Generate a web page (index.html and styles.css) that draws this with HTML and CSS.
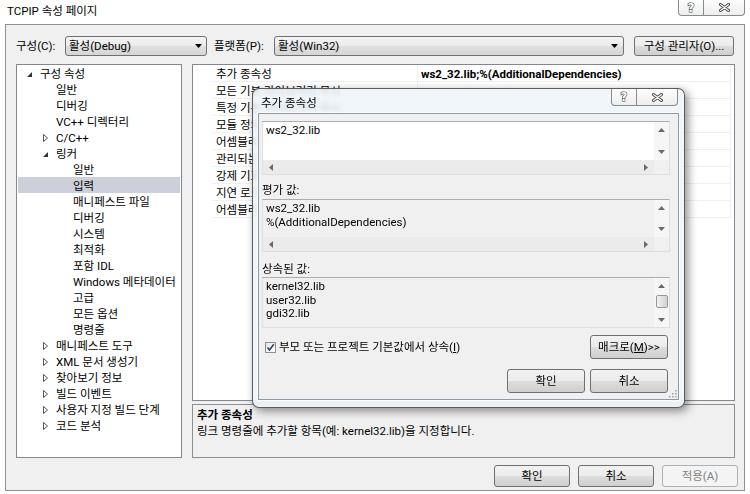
FILE: index.html
```html
<!DOCTYPE html>
<html lang="ko">
  <head>
    <meta charset="UTF-8" />
    <title>TCPIP 속성 페이지</title>
    <link rel="stylesheet" href="styles.css">
  </head>
  <body>
    <!-- 창 제목 -->
    <header class="titlebar">
      <span class="title">TCPIP 속성 페이지</span>
      <div class="caption">
        <span class="cap cap-help"><span class="q">?</span></span>
        <span class="cap cap-close">
          <svg width="11" height="9" viewBox="0 0 11 9"><path d="M1.5 1.5L9.5 7.5M9.5 1.5L1.5 7.5" stroke="#4a4a4a" stroke-width="3" stroke-linecap="round"/><path d="M1.5 1.5L9.5 7.5M9.5 1.5L1.5 7.5" stroke="#fff" stroke-width="1.2" stroke-linecap="round"/></svg>
        </span>
      </div>
    </header>

    <section class="client">
      <div class="toolbar">
        <span class="lbl lbl-config">구성(C):</span>
        <div class="combo combo-config">
          <span>활성(Debug)</span>
          <svg width="7" height="4"><polygon points="0,0 7,0 3.5,4" fill="#000"/></svg>
        </div>
        <span class="lbl lbl-platform">플랫폼(P):</span>
        <div class="combo combo-platform">
          <span>활성(Win32)</span>
          <svg width="7" height="4"><polygon points="0,0 7,0 3.5,4" fill="#000"/></svg>
        </div>
        <button class="btn btn-mgr">구성 관리자(O)...</button>
      </div>

      <div class="main">
        <!-- 속성 트리 -->
        <ul class="tree">
          <li class="l0"><span class="tw"><svg class="exp" width="5" height="5"><polygon points="5,0 5,5 0,5" fill="#333"/></svg></span>구성 속성</li>
          <li class="l1"><span class="tw"></span>일반</li>
          <li class="l1"><span class="tw"></span>디버깅</li>
          <li class="l1"><span class="tw"></span>VC++ 디렉터리</li>
          <li class="l1"><span class="tw"><svg class="col" width="5" height="8"><polygon points="0.5,0.5 4.5,4 0.5,7.5" fill="#fff" stroke="#555"/></svg></span>C/C++</li>
          <li class="l1"><span class="tw"><svg class="exp" width="5" height="5"><polygon points="5,0 5,5 0,5" fill="#333"/></svg></span>링커</li>
          <li class="l2"><span class="tw"></span>일반</li>
          <li class="l2 sel"><span class="tw"></span>입력</li>
          <li class="l2"><span class="tw"></span>매니페스트 파일</li>
          <li class="l2"><span class="tw"></span>디버깅</li>
          <li class="l2"><span class="tw"></span>시스템</li>
          <li class="l2"><span class="tw"></span>최적화</li>
          <li class="l2"><span class="tw"></span>포함 IDL</li>
          <li class="l2"><span class="tw"></span>Windows 메타데이터</li>
          <li class="l2"><span class="tw"></span>고급</li>
          <li class="l2"><span class="tw"></span>모든 옵션</li>
          <li class="l2"><span class="tw"></span>명령줄</li>
          <li class="l1"><span class="tw"><svg class="col" width="5" height="8"><polygon points="0.5,0.5 4.5,4 0.5,7.5" fill="#fff" stroke="#555"/></svg></span>매니페스트 도구</li>
          <li class="l1"><span class="tw"><svg class="col" width="5" height="8"><polygon points="0.5,0.5 4.5,4 0.5,7.5" fill="#fff" stroke="#555"/></svg></span>XML 문서 생성기</li>
          <li class="l1"><span class="tw"><svg class="col" width="5" height="8"><polygon points="0.5,0.5 4.5,4 0.5,7.5" fill="#fff" stroke="#555"/></svg></span>찾아보기 정보</li>
          <li class="l1"><span class="tw"><svg class="col" width="5" height="8"><polygon points="0.5,0.5 4.5,4 0.5,7.5" fill="#fff" stroke="#555"/></svg></span>빌드 이벤트</li>
          <li class="l1"><span class="tw"><svg class="col" width="5" height="8"><polygon points="0.5,0.5 4.5,4 0.5,7.5" fill="#fff" stroke="#555"/></svg></span>사용자 지정 빌드 단계</li>
          <li class="l1"><span class="tw"><svg class="col" width="5" height="8"><polygon points="0.5,0.5 4.5,4 0.5,7.5" fill="#fff" stroke="#555"/></svg></span>코드 분석</li>
        </ul>

        <div class="right">
          <!-- 속성 그리드 -->
          <div class="grid">
            <div class="row"><span class="gut"></span><span class="name">추가 종속성</span><span class="val">ws2_32.lib;%(AdditionalDependencies)</span></div>
            <div class="row"><span class="gut"></span><span class="name">모든 기본 라이브러리 무시</span><span class="val"></span></div>
            <div class="row"><span class="gut"></span><span class="name">특정 기본 라이브러리 무시</span><span class="val"></span></div>
            <div class="row"><span class="gut"></span><span class="name">모듈 정의 파일</span><span class="val"></span></div>
            <div class="row"><span class="gut"></span><span class="name">어셈블리에 모듈 추가</span><span class="val"></span></div>
            <div class="row"><span class="gut"></span><span class="name">관리되는 리소스 파일 포함</span><span class="val"></span></div>
            <div class="row"><span class="gut"></span><span class="name">강제 기호 참조</span><span class="val"></span></div>
            <div class="row"><span class="gut"></span><span class="name">지연 로드된 DLL</span><span class="val"></span></div>
            <div class="row"><span class="gut"></span><span class="name">어셈블리 링크 리소스</span><span class="val"></span></div>
          </div>
          <div class="desc">
            <b>추가 종속성</b><br>
            링크 명령줄에 추가할 항목(예: kernel32.lib)을 지정합니다.
          </div>
        </div>
      </div>

      <div class="footer">
        <button class="btn">확인</button>
        <button class="btn">취소</button>
        <button class="btn" disabled>적용(A)</button>
      </div>
    </section>

    <!-- 추가 종속성 대화 상자 -->
    <div class="dialog">
      <div class="dlg-head">
        <span class="dlg-title">추가 종속성</span>
        <div class="caption">
          <span class="cap cap-help"><span class="q">?</span></span>
          <span class="cap cap-close">
            <svg width="11" height="9" viewBox="0 0 11 9"><path d="M1.5 1.5L9.5 7.5M9.5 1.5L1.5 7.5" stroke="#4a4a4a" stroke-width="3" stroke-linecap="round"/><path d="M1.5 1.5L9.5 7.5M9.5 1.5L1.5 7.5" stroke="#fff" stroke-width="1.2" stroke-linecap="round"/></svg>
          </span>
        </div>
      </div>
      <div class="dlg-body">
        <div class="tb tb1">
          <div class="tb-text">ws2_32.lib</div>
          <div class="vs">
            <span class="sb"><svg width="7" height="4"><polygon points="3.5,0 7,4 0,4"/></svg></span>
            <span class="sb"><svg width="7" height="4"><polygon points="0,0 7,0 3.5,4"/></svg></span>
          </div>
          <div class="hs">
            <span class="sb"><svg width="4" height="7"><polygon points="4,0 4,7 0,3.5"/></svg></span>
            <span class="sb"><svg width="4" height="7"><polygon points="0,0 4,3.5 0,7"/></svg></span>
          </div>
          <div class="corner"></div>
        </div>

        <div class="dlg-lbl lbl-eval">평가 값:</div>
        <div class="tb tb2">
          <div class="tb-text">ws2_32.lib<br>%(AdditionalDependencies)</div>
          <div class="vs">
            <span class="sb"><svg width="7" height="4"><polygon points="3.5,0 7,4 0,4"/></svg></span>
            <span class="sb"><svg width="7" height="4"><polygon points="0,0 7,0 3.5,4"/></svg></span>
          </div>
          <div class="hs">
            <span class="sb"><svg width="4" height="7"><polygon points="4,0 4,7 0,3.5"/></svg></span>
            <span class="sb"><svg width="4" height="7"><polygon points="0,0 4,3.5 0,7"/></svg></span>
          </div>
          <div class="corner"></div>
        </div>

        <div class="dlg-lbl lbl-inh">상속된 값:</div>
        <div class="tb tb3">
          <div class="tb-text">kernel32.lib<br>user32.lib<br>gdi32.lib</div>
          <div class="vs">
            <span class="sb"><svg width="7" height="4"><polygon points="3.5,0 7,4 0,4"/></svg></span>
            <span class="thumb"></span>
            <span class="sb sb-end"><svg width="7" height="4"><polygon points="0,0 7,0 3.5,4"/></svg></span>
          </div>
        </div>

        <div class="opts">
          <label class="chk">
            <span class="box"><svg width="9" height="9" viewBox="0 0 9 9"><path d="M1.5 4.5L3.5 7L7.8 1.2" fill="none" stroke="#2e3f6e" stroke-width="1.6"/></svg></span>
            <span>부모 또는 프로젝트 기본값에서 상속(<u>I</u>)</span>
          </label>
          <button class="btn btn-dlg">매크로(<u>M</u>)&gt;&gt;</button>
        </div>
        <div class="dlg-btns">
          <button class="btn btn-dlg">확인</button>
          <button class="btn btn-dlg">취소</button>
        </div>
        <svg class="grip" width="9" height="9" viewBox="0 0 9 9">
          <rect x="7" y="1" width="1.5" height="1.5" fill="#a0a0a0"/>
          <rect x="4" y="4" width="1.5" height="1.5" fill="#a0a0a0"/>
          <rect x="7" y="4" width="1.5" height="1.5" fill="#a0a0a0"/>
          <rect x="1" y="7" width="1.5" height="1.5" fill="#a0a0a0"/>
          <rect x="4" y="7" width="1.5" height="1.5" fill="#a0a0a0"/>
          <rect x="7" y="7" width="1.5" height="1.5" fill="#a0a0a0"/>
        </svg>
      </div>
    </div>
  </body>
</html>
```

FILE: styles.css
```css
* {
  box-sizing: border-box;
}
body {
  margin: 0;
  width: 750px;
  height: 494px;
  overflow: hidden;
  position: relative;
  background: #fff;
  color: #000;
  font-family: Roboto, "Noto Sans CJK KR", sans-serif;
  font-size: 11.5px;
  line-height: 16px;
}
button {
  font: inherit;
  color: inherit;
  padding: 0;
}

/* 제목 표시줄 */
.titlebar {
  height: 24px;
  display: flex;
  justify-content: space-between;
  align-items: flex-start;
  padding-left: 7px;
}
.title {
  padding-top: 3px;
}
.titlebar .caption {
  margin-right: 5px;
}
.caption {
  display: flex;
}
.cap {
  height: 16px;
  display: flex;
  align-items: center;
  justify-content: center;
  border: 1px solid #8a8a8a;
  border-top: 0;
  background: linear-gradient(#fdfdfd, #eeeeee);
}
.cap-help {
  width: 25px;
  border-right: 0;
  border-radius: 0 0 0 4px;
}
.cap-close {
  width: 42px;
  border-radius: 0 0 4px 0;
}
.q {
  font: bold 12px/12px "DejaVu Sans", sans-serif;
  color: #fff;
  -webkit-text-stroke: 1.2px #4a4a4a;
  paint-order: stroke fill;
}

/* 창 본문 */
.client {
  margin-left: 5px;
  width: 740px;
  height: 467px;
  border: 1px solid #8e8f8f;
  background: #f0f0f0;
  padding: 11px 6px 0 10px;
}
.toolbar {
  display: flex;
  align-items: center;
  height: 20px;
}
.lbl-config {
  width: 49px;
}
.lbl-platform {
  width: 60px;
  margin-left: 7px;
}
.combo {
  height: 20px;
  display: flex;
  align-items: center;
  justify-content: space-between;
  padding: 0 4px 0 3px;
  border: 1px solid #707070;
  border-radius: 3px;
  background: linear-gradient(#f4f4f4, #ebebeb 50%, #dfdfdf 50%, #d6d6d6);
}
.combo-config {
  width: 142px;
  padding-right: 4px;
}
.combo-platform {
  width: 350px;
  padding-right: 5px;
}
.btn {
  height: 22px;
  width: 76px;
  border: 1px solid #707070;
  border-radius: 3px;
  background: linear-gradient(#f2f2f2, #ebebeb 50%, #dddddd 50%, #cfcfcf);
  text-align: center;
}
.btn:disabled {
  border-color: #adb2b5;
  background: #f4f4f4;
  color: #838383;
}
.btn-mgr {
  width: 100px;
  height: 20px;
  margin-left: 10px;
}

.main {
  display: flex;
  margin-top: 8px;
}

/* 트리 */
.tree {
  width: 166px;
  height: 394px;
  margin: 0;
  padding: 0;
  list-style: none;
  border: 1px solid #828790;
  background: #fff;
}
.tree li {
  height: 16px;
  margin: 0 1px;
  padding-top: 2px;
  display: flex;
  align-items: center;
  white-space: nowrap;
}
.tree li.sel {
  background: #cdd0da;
}
.tw {
  width: 16px;
  flex: none;
  display: flex;
  align-items: center;
  padding-left: 3px;
}
.tw .exp {
  margin-top: 1px;
}
.l0 {
  padding-left: 6px;
}
.l1 {
  padding-left: 22px;
}
.l2 {
  padding-left: 39px;
}

/* 속성 그리드 */
.right {
  width: 543px;
  margin-left: 10px;
}
.grid {
  height: 337px;
  border: 1px solid #828790;
  background: #fff;
}
.row {
  display: flex;
  height: 17px;
}
.gut {
  width: 19px;
}
.name {
  width: 206px;
  padding: 1px 0 0 4px;
  border-bottom: 1px solid #f0f0f0;
  border-right: 1px solid #f0f0f0;
  white-space: nowrap;
}
.val {
  width: 313px;
  padding: 1px 0 0 3px;
  font-weight: bold;
  border-bottom: 1px solid #f0f0f0;
  border-right: 1px solid #f0f0f0;
  white-space: nowrap;
}
.desc {
  height: 54px;
  margin-top: 3px;
  padding: 2px 4px;
  border: 1px solid #8e8f8f;
}

.footer {
  display: flex;
  justify-content: flex-end;
  gap: 8px;
  margin-top: 7px;
}

/* 대화 상자 */
.dialog {
  position: absolute;
  left: 252px;
  top: 88px;
  width: 433px;
  height: 320px;
  padding: 0 5px;
  border: 1px solid rgba(40, 40, 40, 0.75);
  border-radius: 7px;
  background: rgba(238, 244, 249, 0.84);
  backdrop-filter: blur(2.5px);
  box-shadow: 3px 3px 10px rgba(0, 0, 0, 0.45);
}
.dlg-head {
  height: 24px;
  display: flex;
  justify-content: space-between;
  align-items: flex-start;
}
.dlg-title {
  padding: 6px 0 0 3px;
}
.dlg-head .caption {
  margin-right: 1px;
}
.dlg-head .cap {
  height: 17px;
}
.dlg-body {
  position: relative;
  height: 287px;
  display: flex;
  flex-direction: column;
  padding: 7px 8px 0 3px;
  border: 1px solid #8e99a6;
  background: #f0f0f0;
  box-shadow: 0 0 0 1px rgba(255, 255, 255, 0.8);
}
.dlg-lbl {
  height: 16px;
}
.lbl-eval {
  margin-top: 7px;
  margin-bottom: 1px;
}
.lbl-inh {
  margin-top: 9px;
  margin-bottom: 0;
}

.tb {
  display: grid;
  grid-template-columns: 1fr 15px;
  border: 1px solid #dbdfe6;
  border-top-color: #abadb3;
}
.tb1 {
  height: 54px;
  grid-template-rows: 1fr 14px;
  background: #fff;
}
.tb2 {
  height: 53px;
  grid-template-rows: 1fr 14px;
  background: #f0f0f0;
}
.tb3 {
  height: 51px;
  background: #f0f0f0;
}
.tb-text {
  padding: 1px 3px;
  line-height: 14px;
}
.tb2 .tb-text {
  padding-top: 1px;
}
.tb3 .tb-text {
  padding-top: 2px;
  line-height: 13.5px;
}
.vs {
  display: flex;
  flex-direction: column;
  justify-content: space-between;
  background: #f6f6f6;
}
.hs {
  display: flex;
  justify-content: space-between;
  background: #ebebeb;
}
.corner {
  background: #f0f0f0;
}
.sb {
  flex: none;
  width: 16px;
  height: 16px;
  display: flex;
  align-items: center;
  justify-content: center;
  fill: #6a6a6a;
}
.vs .sb {
  width: 15px;
}
.hs .sb {
  height: 14px;
}
.thumb {
  height: 13px;
  margin: 1px 1px 0 2px;
  border: 1px solid #979797;
  border-radius: 2px;
  background: linear-gradient(90deg, #f3f3f3, #e2e2e2 50%, #d3d3d3);
}
.sb-end {
  margin-top: auto;
  height: 14px;
}

.opts {
  display: flex;
  align-items: center;
  justify-content: space-between;
  height: 24px;
  margin-top: 7px;
}
.chk {
  display: flex;
  align-items: center;
  gap: 3px;
  padding-left: 3px;
}
.box {
  width: 11px;
  height: 11px;
  display: flex;
  align-items: center;
  justify-content: center;
  border: 1px solid #8e8f8f;
  background: linear-gradient(135deg, #e6e6e6, #ffffff);
}
.btn-dlg {
  width: 78px;
  height: 24px;
  margin-right: 2px;
}
.dlg-btns {
  display: flex;
  justify-content: flex-end;
  gap: 5px;
  margin-top: 10px;
}
.dlg-btns .btn-dlg:first-child {
  margin-right: 0;
}
.grip {
  position: absolute;
  right: 1px;
  bottom: 1px;
}
```
